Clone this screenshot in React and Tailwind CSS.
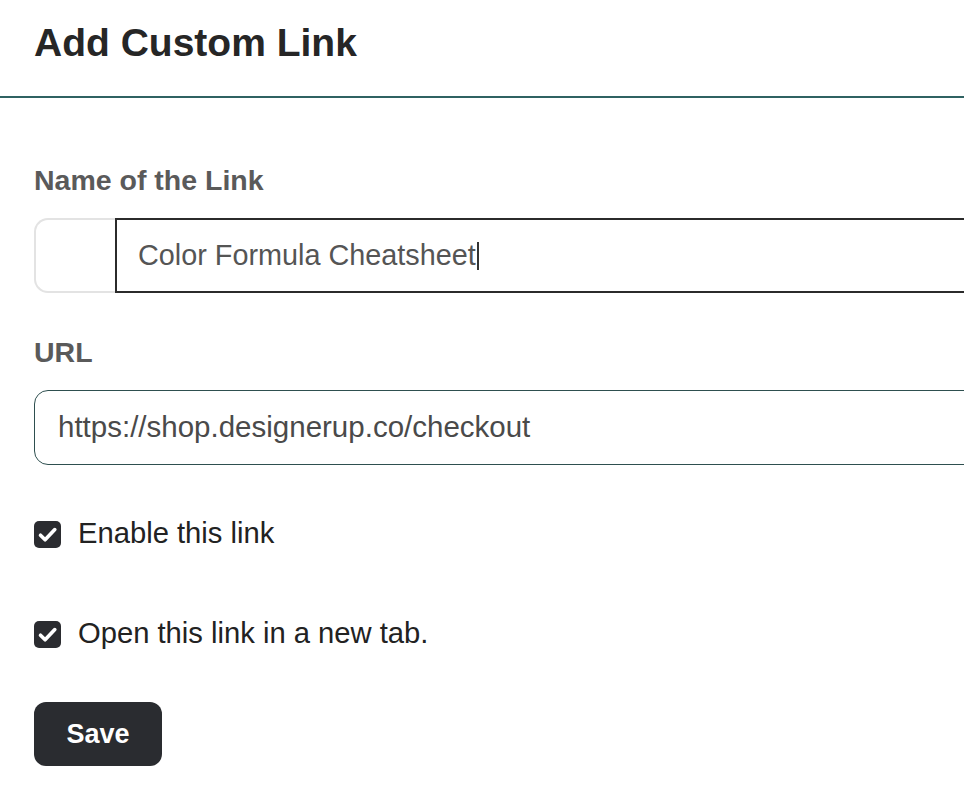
import React from "react";

function Check() {
  return (
    <span className="flex h-[27px] w-[27px] shrink-0 items-center justify-center rounded-[5px] bg-[#2b2c30]">
      <svg viewBox="0 0 27 27" className="h-[27px] w-[27px]" fill="none" stroke="#fff" strokeWidth="3.6" strokeLinecap="round" strokeLinejoin="round">
        <path d="M6.5 14.2l4.6 4.6L20.8 8.6" />
      </svg>
    </span>
  );
}

export default function App() {
  return (
    <div className="min-h-screen w-full overflow-hidden bg-white font-['Liberation_Sans',Arial,sans-serif]">
      <header className="h-[98px] border-b-2 border-[#2f6262] pl-[34px] pt-[20px]">
        <h1 className="text-[39px] leading-[46px] font-bold text-[#262626]">Add Custom Link</h1>
      </header>

      <form className="flex w-[1020px] flex-col pl-[34px] pt-[65px]">
        <label className="text-[28.5px] leading-[34px] font-bold text-[#5a5a5a]">Name of the Link</label>
        <div className="mt-[21px] flex h-[75px]">
          <div className="w-[81px] shrink-0 rounded-l-[14px] border-2 border-r-0 border-[#e3e3e3] bg-white" />
          <div className="flex flex-1 items-center border-2 border-[#2b2b2b] pl-[21px] text-[28.8px] text-[#555]">
            Color Formula Cheatsheet
            <span className="ml-px h-[28px] w-[2px] bg-[#333]" />
          </div>
        </div>

        <label className="mt-[42px] text-[28.5px] leading-[34px] font-bold text-[#5a5a5a]">URL</label>
        <div className="mt-[21px] flex h-[75px] items-center rounded-[14px] border-[1.5px] border-[#2e4f4f] pl-[23px] text-[29.5px] text-[#4a4a4a]">
          https://shop.designerup.co/checkout
        </div>

        <label className="mt-[52px] flex h-[34px] items-center gap-[17px] text-[29.2px] text-[#222]">
          <Check />
          Enable this link
        </label>

        <label className="mt-[66px] flex h-[34px] items-center gap-[17px] text-[29.2px] text-[#222]">
          <Check />
          Open this link in a new tab.
        </label>

        <div className="mt-[51px]">
          <button type="button" className="h-[64px] w-[128px] rounded-[12px] bg-[#2a2c30] text-[27px] font-bold text-white">
            Save
          </button>
        </div>
      </form>
    </div>
  );
}
